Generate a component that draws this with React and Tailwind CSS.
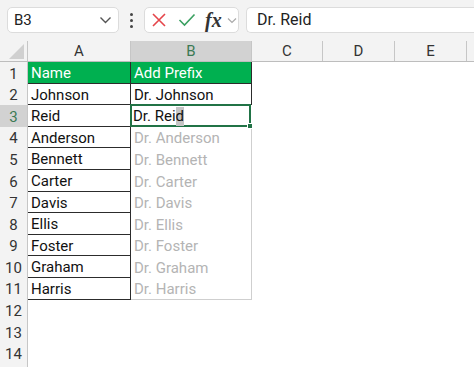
import React from "react";

const names = ["Johnson","Reid","Anderson","Bennett","Carter","Davis","Ellis","Foster","Graham","Harris"];

function Row({ n, children, selected }) {
  return (
    <div className="flex h-[21.6px]">
      <div className={`w-[28px] shrink-0 border-r border-[#c6c6c6] flex items-center justify-center pt-[2px] text-[15px] ${selected ? "bg-[#d2d2d2] text-[#3c7a55]" : "bg-[#f3f3f3] text-[#333]"}`}>{n}</div>
      {children}
    </div>
  );
}

export default function App() {
  return (
    <div className="w-[474px] h-[367px] overflow-hidden bg-white" style={{ fontFamily: "Roboto, 'Noto Sans', sans-serif" }}>
      {/* toolbar */}
      <div className="h-[41px] bg-[#f3f3f3] flex items-center pl-[7px] pb-[1px]">
        <div className="w-[112px] h-[26px] bg-white rounded-[5px] border border-[#dcdcdc] flex items-center justify-between pl-[6px] pr-[6px]">
          <span className="text-[15px] text-[#222]">B3</span>
          <svg width="13" height="8" viewBox="0 0 13 8"><path d="M1.5 1.5 L6.5 6.5 L11.5 1.5" fill="none" stroke="#555" strokeWidth="1.4"/></svg>
        </div>
        <div className="w-[25px] flex flex-col items-center gap-[3px]">
          <div className="w-[3px] h-[3px] rounded-full bg-[#444]" />
          <div className="w-[3px] h-[3px] rounded-full bg-[#444]" />
          <div className="w-[3px] h-[3px] rounded-full bg-[#444]" />
        </div>
        <div className="w-[95px] h-[26px] bg-white rounded-[5px] border border-[#dcdcdc] flex items-center pl-[6px]">
          <svg width="16" height="16" viewBox="0 0 16 16"><path d="M2 2 L14 14 M14 2 L2 14" stroke="#e5454a" strokeWidth="1.6"/></svg>
          <svg className="ml-[11px]" width="18" height="14" viewBox="0 0 18 14"><path d="M1.5 7 L6.5 12 L16.5 1.5" fill="none" stroke="#3aa061" strokeWidth="1.6"/></svg>
          <span className="ml-[9px] text-[20px] italic font-bold text-[#333] leading-none" style={{ fontFamily: "'Liberation Serif', serif" }}>fx</span>
          <svg className="ml-[5px]" width="10" height="7" viewBox="0 0 10 7"><path d="M1 1.5 L5 5.5 L9 1.5" fill="none" stroke="#aaa" strokeWidth="1.2"/></svg>
        </div>
        <div className="ml-[7px] flex-1 h-[26px] bg-white rounded-l-[5px] border border-r-0 border-[#dcdcdc] flex items-center pl-[10px] text-[16px] text-[#222]">Dr. Reid</div>
      </div>
      {/* column headers */}
      <div className="flex h-[21px] bg-[#f3f3f3] border-b border-[#bdbdbd] text-[15px] text-[#333]">
        <div className="w-[28px] shrink-0 border-r border-[#c6c6c6] relative">
          <svg className="absolute right-[3px] bottom-[2px]" width="15" height="15" viewBox="0 0 15 15"><path d="M15 0 L15 15 L0 15 Z" fill="#d0d0d0"/></svg>
        </div>
        <div className="w-[103px] shrink-0 border-r border-[#c6c6c6] flex items-center justify-center pt-[1px]">A</div>
        <div className="w-[121px] shrink-0 border-r border-[#c6c6c6] bg-[#d2d2d2] text-[#3c7a55] flex items-center justify-center pt-[1px]">B</div>
        <div className="w-[71px] shrink-0 border-r border-[#c6c6c6] flex items-center justify-center pt-[1px]">C</div>
        <div className="w-[72px] shrink-0 border-r border-[#c6c6c6] flex items-center justify-center pt-[1px]">D</div>
        <div className="w-[72px] shrink-0 border-r border-[#c6c6c6] flex items-center justify-center pt-[1px]">E</div>
        <div className="flex-1" />
      </div>
      {/* rows */}
      <div className="text-[15px]">
        <Row n={1}>
          <div className="w-[103px] shrink-0 bg-[#00b050] text-white border-b border-r border-[#2c2c2c] flex items-center pl-[3px] pt-[2px]">Name</div>
          <div className="w-[121px] shrink-0 bg-[#00b050] text-white border-b border-r border-[#2c2c2c] flex items-center pl-[3px] pt-[2px]">Add Prefix</div>
        </Row>
        {names.map((nm, i) => {
          const r = i + 2;
          let bcell;
          if (r === 2) {
            bcell = <div className="w-[121px] shrink-0 text-[#111] border-b border-r border-[#2c2c2c] flex items-center pl-[3px] pt-[2px]">Dr. Johnson</div>;
          } else if (r === 3) {
            bcell = (
              <div className="w-[121px] shrink-0 text-[#111] flex items-center pl-[1px] pt-[1px] relative border-2 border-[#217346] -ml-[1px] -mt-[1px] h-[23px] z-10 box-border">
                <span>Dr. Rei</span><span className="bg-[#c4c4c4] h-[19px] flex items-center">d</span>
                <div className="absolute -right-[4px] -bottom-[4px] w-[6px] h-[6px] bg-[#217346] border border-white" />
              </div>
            );
          } else {
            bcell = <div className={`w-[121px] shrink-0 text-[#b4b4b4] border-r border-[#cfcfcf] ${r === 11 ? "border-b" : ""} flex items-center pl-[3px] pt-[2px]`}>Dr. {nm}</div>;
          }
          return (
            <Row key={r} n={r} selected={r === 3}>
              <div className="w-[103px] shrink-0 text-[#111] border-b border-r border-[#2c2c2c] flex items-center pl-[3px] pt-[2px]">{nm}</div>
              {bcell}
            </Row>
          );
        })}
        {[12, 13, 14].map((r) => (
          <Row key={r} n={r}><div /></Row>
        ))}
        <div className="flex h-[21.6px]">
          <div className="w-[28px] shrink-0 border-r border-[#c6c6c6] bg-[#f3f3f3]" />
        </div>
      </div>
    </div>
  );
}
